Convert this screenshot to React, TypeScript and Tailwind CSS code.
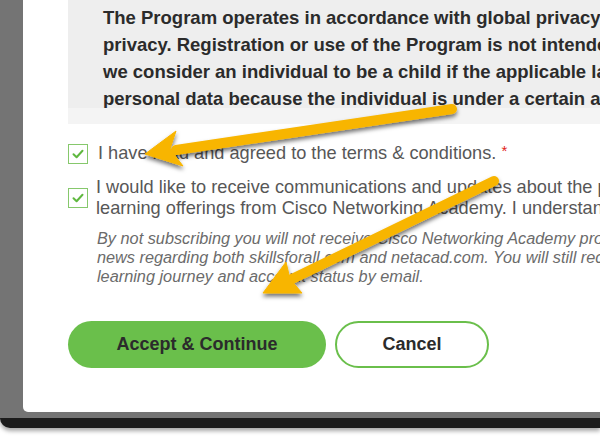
import React from "react";

function Check() {
  return (
    <div className="w-[20px] h-[20px] shrink-0 border-[1.5px] border-[#86c86c] bg-white flex items-center justify-center">
      <svg width="14" height="14" viewBox="0 0 14 14">
        <path d="M2.5 7.2 L5.6 10.2 L11.5 3.8" fill="none" stroke="#5fb83f" strokeWidth="2" strokeLinecap="round" strokeLinejoin="round" />
      </svg>
    </div>
  );
}

function Arrows() {
  return (
    <svg className="absolute left-0 top-0 pointer-events-none" width="600" height="442" viewBox="0 0 600 442">
      <defs>
        <filter id="sh" x="-20%" y="-20%" width="140%" height="160%">
          <feDropShadow dx="0" dy="3" stdDeviation="2.2" floodColor="#000" floodOpacity="0.55" />
        </filter>
      </defs>
      <g filter="url(#sh)" fill="#f8b500" stroke="#f8b500">
        <line x1="452" y1="109" x2="176" y2="150" strokeWidth="10" strokeLinecap="round" />
        <polygon points="145,154 176,131 170,149 183,166" strokeWidth="1" strokeLinejoin="round" />
      </g>
      <g filter="url(#sh)" fill="#f8b500" stroke="#f8b500">
        <line x1="494" y1="181" x2="292" y2="279" strokeWidth="10" strokeLinecap="round" />
        <polygon points="263,293 286,262 290,279 302,293" strokeWidth="1" strokeLinejoin="round" />
      </g>
    </svg>
  );
}

export default function App() {
  return (
    <div className="relative w-[600px] h-[442px] overflow-hidden bg-white" style={{ fontFamily: '"Liberation Sans", Arial, sans-serif' }}>
      <div className="h-[428px] bg-[#747474] pl-[23px] pb-[6px] border-b-[10px] border-[#1c1c1c] rounded-bl-[10px] shadow-[0_3px_4px_rgba(0,0,0,0.35)] flex flex-col">
        <div className="flex-1 bg-white rounded-bl-[5px] pl-[45px] flex flex-col overflow-hidden">
          <div className="h-[124px] shrink-0 bg-[#f4f4f4]">
            <div className="h-[108px] overflow-hidden bg-[#eeeeee] pl-[35px] pt-[4px] text-[18.5px] font-bold leading-[27px] text-[#2b2b2b] whitespace-nowrap">
              <div>The Program operates in accordance with global privacy la</div>
              <div>privacy. Registration or use of the Program is not intende</div>
              <div>we consider an individual to be a child if the applicable la</div>
              <div>personal data because the individual is under a certain ag</div>
            </div>
          </div>
          <div className="mt-[19px] flex items-center gap-[10px] text-[18.2px] leading-[20px] text-[#575757] whitespace-nowrap">
            <Check />
            <div>
              I have read and agreed to the terms &amp; conditions. <span className="text-[#e2231a] text-[15px] relative -top-[3px]">*</span>
            </div>
          </div>
          <div className="mt-[13px] flex items-center gap-[8px] text-[18.2px] leading-[21px] text-[#575757] whitespace-nowrap">
            <Check />
            <div>
              <div>I would like to receive communications and updates about the p</div>
              <div>learning offerings from Cisco Networking Academy. I understan</div>
            </div>
          </div>
          <div className="mt-[10px] pl-[29px] text-[16.3px] leading-[19px] italic text-[#6b6b6b] whitespace-nowrap">
            <div>By not subscribing you will not receive Cisco Networking Academy pro</div>
            <div>news regarding both skillsforall.com and netacad.com. You will still rec</div>
            <div>learning journey and account status by email.</div>
          </div>
          <div className="mt-[35px] flex gap-[9px]">
            <div className="w-[258px] h-[47px] rounded-full bg-[#6abf4b] flex items-center justify-center text-[18px] font-bold text-[#2b2b2b]">
              Accept &amp; Continue
            </div>
            <div className="w-[154px] h-[47px] rounded-full bg-white border-2 border-[#6abf4b] flex items-center justify-center text-[18px] font-bold text-[#2b2b2b]">
              Cancel
            </div>
          </div>
        </div>
      </div>
      <Arrows />
    </div>
  );
}
